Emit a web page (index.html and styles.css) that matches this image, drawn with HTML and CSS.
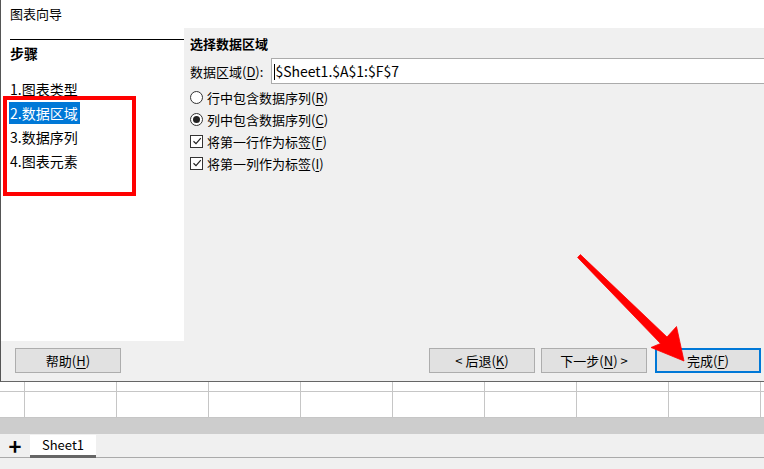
FILE: index.html
```html
<!DOCTYPE html>
<html lang="zh-CN">
<head>
  <meta charset="UTF-8" />
  <title>图表向导</title>
  <link rel="stylesheet" href="styles.css">
</head>
<body>
  <div class="dialog">
    <div class="titlebar">图表向导</div>

    <div class="dialog-body">
      <div class="steps">
        <div class="steps-title">步骤</div>
        <ul class="step-list">
          <li>1.图表类型</li>
          <li><span class="current">2.数据区域</span></li>
          <li>3.数据序列</li>
          <li>4.图表元素</li>
        </ul>
      </div>

      <div class="content">
        <div class="content-title">选择数据区域</div>
        <div class="range-row">
          <label for="range">数据区域(<u>D</u>):</label>
          <div class="range-input" id="range"><span class="caret"></span>$Sheet1.$A$1:$F$7</div>
        </div>
        <div class="option"><span class="radio"></span>行中包含数据序列(<u>R</u>)</div>
        <div class="option"><span class="radio checked"></span>列中包含数据序列(<u>C</u>)</div>
        <div class="option"><span class="check">
          <svg width="10" height="10" viewBox="0 0 10 10"><path d="M1.5 5.2 L4 7.6 L8.8 2.2" fill="none" stroke="#222" stroke-width="1.2"/></svg>
        </span>将第一行作为标签(<u>F</u>)</div>
        <div class="option"><span class="check">
          <svg width="10" height="10" viewBox="0 0 10 10"><path d="M1.5 5.2 L4 7.6 L8.8 2.2" fill="none" stroke="#222" stroke-width="1.2"/></svg>
        </span>将第一列作为标签(<u>I</u>)</div>
      </div>
    </div>

    <div class="button-bar">
      <button class="btn help">帮助(<u>H</u>)</button>
      <div class="nav-buttons">
        <button class="btn">&lt; 后退(<u>K</u>)</button>
        <button class="btn">下一步(<u>N</u>) &gt;</button>
        <button class="btn primary">完成(<u>F</u>)</button>
      </div>
    </div>
  </div>

  <div class="grid">
    <div class="grid-row top">
      <div class="cell first"></div><div class="cell"></div><div class="cell"></div><div class="cell"></div>
      <div class="cell"></div><div class="cell"></div><div class="cell"></div><div class="cell"></div><div class="cell"></div>
    </div>
    <div class="grid-row">
      <div class="cell first"></div><div class="cell"></div><div class="cell"></div><div class="cell"></div>
      <div class="cell"></div><div class="cell"></div><div class="cell"></div><div class="cell"></div><div class="cell"></div>
    </div>
  </div>
  <div class="hscroll"></div>
  <div class="tabbar">
    <span class="add-tab">+</span>
    <span class="tab">Sheet1</span>
  </div>

  <!-- annotations drawn over the screenshot -->
  <div class="red-box"></div>
  <svg class="arrow" width="764" height="469" viewBox="0 0 764 469">
    <polygon fill="#f00" stroke="#f00" stroke-width="0.8" stroke-linejoin="round"
      points="577.6,257.4 660.5,343.5 651,347.5 684,361 676.5,326.5 667,337 580.4,254.6"/>
  </svg>
</body>
</html>
```

FILE: styles.css
```css
* {
  box-sizing: border-box;
}

body {
  margin: 0;
  width: 764px;
  height: 469px;
  overflow: hidden;
  position: relative;
  background: #f0f0f0;
  font-family: "Noto Sans CJK SC", "Noto Sans", sans-serif;
  font-size: 13px;
  color: #000;
}

u {
  text-decoration: underline;
  text-underline-offset: 2px;
}

.dialog {
  height: 382px;
  border-left: 1px solid #555;
  border-bottom: 1px solid #666;
  background: #f0f0f0;
}

.titlebar {
  height: 28px;
  line-height: 28px;
  padding-left: 9px;
  background: #fff;
  font-size: 13px;
}

.dialog-body {
  display: flex;
  height: 313px;
}

.steps {
  width: 183px;
  background: #fff;
  padding: 11px 0 0 9px;
}

.steps-title {
  border-top: 1px solid #000;
  padding-top: 3px;
  line-height: 20px;
  font-size: 14px;
  font-weight: bold;
}

.step-list {
  list-style: none;
  margin: 14px 0 0;
  padding: 0;
  font-size: 14px;
  line-height: 24px;
}

.current {
  background: #0078d7;
  color: #fff;
  padding: 1px 2px 1px 1px;
  margin-left: -1px;
}

.content {
  flex: 1;
  padding: 6px 0 0 6px;
  min-width: 0;
}

.content-title {
  font-weight: bold;
  line-height: 20px;
}

.range-row {
  display: flex;
  align-items: center;
  gap: 8px;
  margin-top: 4px;
  height: 26px;
}

.range-input {
  flex: 1;
  height: 26px;
  line-height: 24px;
  background: #fff;
  border: 1px solid #ababab;
  border-right: none;
  padding-left: 2px;
  font-size: 14px;
  white-space: nowrap;
}

.caret {
  display: inline-block;
  width: 1px;
  height: 16px;
  background: #000;
  vertical-align: -3px;
}

.option {
  display: flex;
  align-items: center;
  height: 22px;
}

.range-row + .option {
  margin-top: 2px;
}

.radio {
  width: 13px;
  height: 13px;
  border: 1px solid #333;
  border-radius: 50%;
  margin-right: 4px;
  display: flex;
  align-items: center;
  justify-content: center;
  background: #fff;
}

.radio.checked::after {
  content: "";
  width: 7px;
  height: 7px;
  border-radius: 50%;
  background: #222;
}

.check {
  width: 13px;
  height: 13px;
  border: 1px solid #333;
  margin-right: 4px;
  display: flex;
  align-items: center;
  justify-content: center;
  background: #fff;
}

.button-bar {
  display: flex;
  justify-content: space-between;
  padding: 7px 3px 0 14px;
  height: 40px;
}

.nav-buttons {
  display: flex;
  gap: 6px;
}

.btn {
  width: 106px;
  height: 25px;
  padding: 0;
  background: #e1e1e1;
  border: 1px solid #adadad;
  font-family: inherit;
  font-size: 13px;
  color: #000;
}

.btn.primary {
  border: 2px solid #0078d7;
  margin-left: 2px;
}

.grid {
  height: 36px;
  background: #fff;
}

.grid-row {
  display: flex;
  height: 26px;
  border-bottom: 1px solid #c6c6c6;
}

.grid-row.top {
  height: 10px;
}

.cell {
  flex: 0 0 92px;
  border-right: 1px solid #c6c6c6;
}

.cell.first {
  flex-basis: 25px;
}

.hscroll {
  height: 16px;
  background: #cdcdcd;
}

.tabbar {
  display: flex;
  align-items: flex-start;
  height: 35px;
  padding-top: 1px;
  background: linear-gradient(#f0f0f0 23px, #aaa 23px, #aaa 24px, #f0f0f0 24px);
}

.add-tab {
  width: 30px;
  text-align: center;
  font-size: 22px;
  font-weight: bold;
  line-height: 20px;
}

.tab {
  width: 66px;
  height: 23px;
  background: #fff;
  border-bottom: 3px solid #666;
  text-align: center;
  line-height: 20px;
  font-size: 13px;
}

.red-box {
  position: absolute;
  left: 3px;
  top: 96px;
  width: 133px;
  height: 100px;
  border: 4px solid #f00;
}

.arrow {
  position: absolute;
  left: 0;
  top: 0;
}
```
